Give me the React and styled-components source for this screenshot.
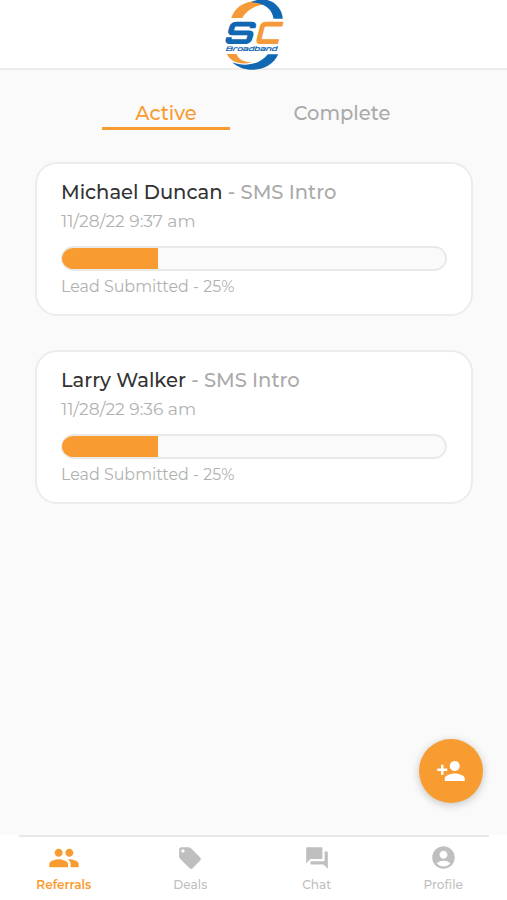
import React from "react";
import styled, { createGlobalStyle } from "styled-components";
import {
  MdPeople,
  MdLocalOffer,
  MdQuestionAnswer,
  MdAccountCircle,
  MdPersonAdd,
} from "react-icons/md";

const ORANGE = "#f89c31";

const GlobalStyle = createGlobalStyle`
  * { box-sizing: border-box; }
  body {
    margin: 0;
    background: #fafafa;
    font-family: Montserrat, Inter, sans-serif;
  }
`;

const Screen = styled.div`
  position: relative;
  display: flex;
  flex-direction: column;
  width: 507px;
  height: 900px;
  overflow: hidden;
  background: #fafafa;
`;

const Header = styled.header`
  display: flex;
  justify-content: center;
  flex: none;
  height: 70px;
  background: #fff;
  border-bottom: 2px solid #ececec;
`;

const LogoDrawing = styled.svg`
  width: 90px;
  height: 70px;
  flex: none;
`;

const Tabs = styled.nav`
  display: flex;
  gap: 48px;
  padding: 29px 0 0 102px;
`;

const Tab = styled.button`
  width: 128px;
  height: 31px;
  padding: 0;
  border: 0;
  border-bottom: 3px solid ${(p) => (p.$active ? ORANGE : "transparent")};
  background: none;
  color: ${(p) => (p.$active ? ORANGE : "#aaa")};
  font: 500 19.5px/27px Montserrat, Inter, sans-serif;
  white-space: nowrap;
`;

const CardList = styled.main`
  display: flex;
  flex: 1;
  flex-direction: column;
  gap: 34px;
  padding: 32px 34px 0 35px;
`;

const Card = styled.article`
  height: 154px;
  padding: 16px 24px 0;
  border: 2px solid #ececec;
  border-radius: 22px;
  background: #fff;
`;

const Title = styled.h2`
  margin: 0;
  color: #aaa;
  font-size: 19.55px;
  font-weight: 500;
  line-height: 24px;
  white-space: nowrap;
`;

const Name = styled.span`
  color: #333;
`;

const Timestamp = styled.p`
  margin: 6px 0 0;
  color: #b1b1b1;
  font-size: 17.1px;
  line-height: 22px;
`;

const Track = styled.div`
  height: 25px;
  margin-top: 14px;
  overflow: hidden;
  border: 2px solid #e9e9e9;
  border-left-width: 1px;
  border-radius: 13px;
  background: #fafafa;
`;

const Fill = styled.div`
  height: 100%;
  background: ${ORANGE};
`;

const Status = styled.p`
  margin: 5px 0 0;
  color: #b1b1b1;
  font-size: 15.9px;
  line-height: 21px;
`;

const AddButton = styled.button`
  position: absolute;
  right: 24px;
  bottom: 97.5px;
  display: grid;
  place-items: center;
  width: 64px;
  height: 64px;
  padding: 0;
  border: 0;
  border-radius: 50%;
  background: ${ORANGE};
  color: #fff;
  box-shadow: 0 2px 8px rgba(0, 0, 0, 0.22);
`;

const BottomBar = styled.footer`
  display: flex;
  flex: none;
  flex-direction: column;
  align-items: center;
  height: 65px;
  background: #fff;
`;

const Divider = styled.div`
  width: 470px;
  height: 2px;
  background: #e8e8e8;
`;

const NavItems = styled.nav`
  display: grid;
  grid-template-columns: repeat(4, 126.5px);
`;

const NavItem = styled.a`
  display: flex;
  flex-direction: column;
  align-items: center;
  color: ${(p) => (p.$active ? ORANGE : "#bfbfbf")};
  font-size: 12.1px;
  font-weight: ${(p) => (p.$active ? 600 : 500)};
  line-height: 16px;
`;

const IconSlot = styled.span`
  display: grid;
  place-items: center;
  height: 33px;
  margin: 4px 0 3px;
`;

function Logo() {
  return (
    <LogoDrawing viewBox="-4.5 0 270 210" role="img" aria-label="SC Broadband">
      <path d="M62 54C77 12 122-10 178 13C138 12 110 28 95 54Z" fill="#f49a38" />
      <path d="M122 7C163-16 213 8 217 56H189C186 30 164 8 122 7Z" fill="#1267b2" />
      <g fontFamily="Orbitron, Montserrat, sans-serif" fontWeight="900" fontStyle="italic" fontSize="93">
        <text x="35" y="132" fill="#1267b2" textLength="91" lengthAdjust="spacingAndGlyphs">S</text>
        <text x="130" y="132" fill="#f49a38" textLength="77" lengthAdjust="spacingAndGlyphs">C</text>
      </g>
      <text x="44" y="154" fill="#1267b2" fontFamily="Orbitron, Montserrat, sans-serif" fontWeight="700" fontStyle="italic" fontSize="19" textLength="155" lengthAdjust="spacingAndGlyphs">Broadband</text>
      <path d="M49 162H78C84 178 100 187 125 187C88 197 60 185 49 162Z" fill="#f49a38" />
      <path d="M65 187C105 202 151 192 172 163H203C181 215 104 224 65 187Z" fill="#1267b2" />
    </LogoDrawing>
  );
}

const referrals = [
  { name: "Michael Duncan", source: "SMS Intro", date: "11/28/22 9:37 am", stage: "Lead Submitted", percent: 25 },
  { name: "Larry Walker", source: "SMS Intro", date: "11/28/22 9:36 am", stage: "Lead Submitted", percent: 25 },
];

const navigation = [
  { label: "Referrals", Icon: MdPeople, size: 32, active: true },
  { label: "Deals", Icon: MdLocalOffer, size: 26 },
  { label: "Chat", Icon: MdQuestionAnswer, size: 26 },
  { label: "Profile", Icon: MdAccountCircle, size: 27 },
];

export default function App() {
  return (
    <>
      <GlobalStyle />
      <Screen>
        <Header><Logo /></Header>
        <Tabs>
          <Tab $active>Active</Tab>
          <Tab>Complete</Tab>
        </Tabs>
        <CardList>
          {referrals.map((r) => (
            <Card key={r.name}>
              <Title><Name>{r.name}</Name> - {r.source}</Title>
              <Timestamp>{r.date}</Timestamp>
              <Track><Fill style={{ width: `${r.percent}%` }} /></Track>
              <Status>{r.stage} - {r.percent}%</Status>
            </Card>
          ))}
        </CardList>
        <BottomBar>
          <Divider />
          <NavItems>
            {navigation.map(({ label, Icon, size, active }) => (
              <NavItem key={label} $active={active}>
                <IconSlot><Icon size={size} /></IconSlot>
                {label}
              </NavItem>
            ))}
          </NavItems>
        </BottomBar>
        <AddButton aria-label="Add referral"><MdPersonAdd size={30} /></AddButton>
      </Screen>
    </>
  );
}
